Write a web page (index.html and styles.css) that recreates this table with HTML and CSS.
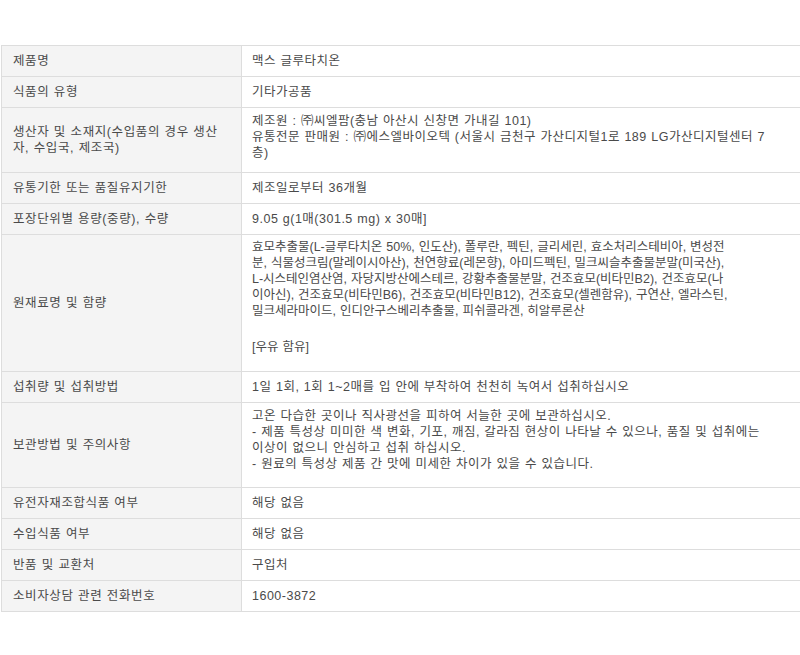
FILE: index.html
```html
<!DOCTYPE html>
<html lang="ko">
<head>
<meta charset="utf-8">
<title>상품정보제공고시</title>
<link rel="stylesheet" href="styles.css">
</head>
<body>
<div class="wrap">
<table class="info">
  <tbody>
    <tr>
      <th>제품명</th>
      <td>맥스 글루타치온</td>
    </tr>
    <tr>
      <th>식품의 유형</th>
      <td>기타가공품</td>
    </tr>
    <tr>
      <th>생산자 및 소재지(수입품의 경우 생산<br>자, 수입국, 제조국)</th>
      <td class="r3">제조원 : ㈜씨엘팜(충남 아산시 신창면 가내길 101)<br>유통전문 판매원 : ㈜에스엘바이오텍 (서울시 금천구 가산디지털1로 189 LG가산디지털센터 7<br>층)</td>
    </tr>
    <tr>
      <th>유통기한 또는 품질유지기한</th>
      <td>제조일로부터 36개월</td>
    </tr>
    <tr>
      <th>포장단위별 용량(중량), 수량</th>
      <td>9.05 g(1매(301.5 mg) x 30매]</td>
    </tr>
    <tr>
      <th>원재료명 및 함량</th>
      <td class="r6">효모추출물(L-글루타치온 50%, 인도산), 폴루란, 펙틴, 글리세린, 효소처리스테비아, 변성전<br>분, 식물성크림(말레이시아산), 천연향료(레몬향), 아미드펙틴, 밀크씨슬추출물분말(미국산),<br>L-시스테인염산염, 자당지방산에스테르, 강황추출물분말, 건조효모(비타민B2), 건조효모(나<br>이아신), 건조효모(비타민B6), 건조효모(비타민B12), 건조효모(셀렌함유), 구연산, 엘라스틴,<br>밀크세라마이드, 인디안구스베리추출물, 피쉬콜라겐, 히알루론산<p class="note">[우유 함유]</p></td>
    </tr>
    <tr>
      <th>섭취량 및 섭취방법</th>
      <td>1일 1회, 1회 1~2매를 입 안에 부착하여 천천히 녹여서 섭취하십시오</td>
    </tr>
    <tr>
      <th>보관방법 및 주의사항</th>
      <td class="r8">고온 다습한 곳이나 직사광선을 피하여 서늘한 곳에 보관하십시오.<br>- 제품 특성상 미미한 색 변화, 기포, 깨짐, 갈라짐 현상이 나타날 수 있으나, 품질 및 섭취에는<br>이상이 없으니 안심하고 섭취 하십시오.<br>- 원료의 특성상 제품 간 맛에 미세한 차이가 있을 수 있습니다.</td>
    </tr>
    <tr>
      <th>유전자재조합식품 여부</th>
      <td>해당 없음</td>
    </tr>
    <tr>
      <th>수입식품 여부</th>
      <td>해당 없음</td>
    </tr>
    <tr>
      <th>반품 및 교환처</th>
      <td>구입처</td>
    </tr>
    <tr>
      <th>소비자상담 관련 전화번호</th>
      <td>1600-3872</td>
    </tr>
  </tbody>
</table>
</div>
</body>
</html>
```

FILE: styles.css
```css
html, body {
  margin: 0;
  padding: 0;
  background: #ffffff;
  overflow: hidden;
}

.wrap {
  padding: 45px 0 0 1px;
  width: 801px;
}

.info {
  width: 800px;
  border-collapse: collapse;
  table-layout: fixed;
  font-family: "Liberation Sans", "Noto Sans CJK KR", sans-serif;
  font-size: 12.5px;
  line-height: 16px;
  word-spacing: 0.5px;
  color: #4a4a4a;
}

.info th,
.info td {
  border: 1px solid #dddddd;
  padding: 7px 4px 7px 10px;
  text-align: left;
  vertical-align: middle;
  font-weight: normal;
  letter-spacing: 0.5px;
}

.info th {
  width: 224px;
  padding-left: 11px;
  background: #f4f4f4;
  letter-spacing: 0.6px;
}

.info td.r3 {
  padding: 5px 4px 11px 10px;
}

.info td.r6 {
  padding: 4px 4px 16px 10px;
  letter-spacing: 0;
}

.info td.r8 {
  padding: 5px 4px 15px 10px;
}

.note {
  margin: 20px 0 0;
}
```
